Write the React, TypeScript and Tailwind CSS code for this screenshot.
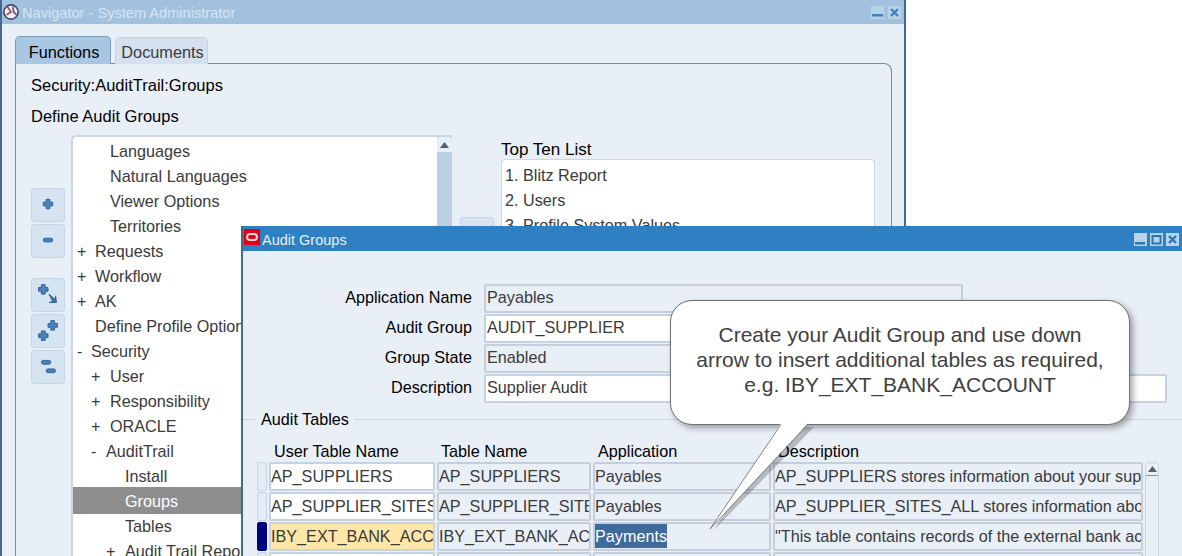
const FONT = "font-['Liberation_Sans',Arial,sans-serif]";

interface TreeRow {
  glyph?: string;
  glyphX?: number;
  label: string;
  x: number;
  selected?: boolean;
}

const TREE_ROWS: TreeRow[] = [
  { label: "Languages", x: 110 },
  { label: "Natural Languages", x: 110 },
  { label: "Viewer Options", x: 110 },
  { label: "Territories", x: 110 },
  { glyph: "+", glyphX: 77, label: "Requests", x: 95 },
  { glyph: "+", glyphX: 77, label: "Workflow", x: 95 },
  { glyph: "+", glyphX: 77, label: "AK", x: 95 },
  { label: "Define Profile Options", x: 95 },
  { glyph: "-", glyphX: 77, label: "Security", x: 91 },
  { glyph: "+", glyphX: 91, label: "User", x: 110 },
  { glyph: "+", glyphX: 91, label: "Responsibility", x: 110 },
  { glyph: "+", glyphX: 91, label: "ORACLE", x: 110 },
  { glyph: "-", glyphX: 91, label: "AuditTrail", x: 106 },
  { label: "Install", x: 125 },
  { label: "Groups", x: 125, selected: true },
  { label: "Tables", x: 125 },
  { glyph: "+", glyphX: 106, label: "Audit Trail Reports", x: 125 },
];

const TABLE_ROWS = [
  {
    user: "AP_SUPPLIERS",
    table: "AP_SUPPLIERS",
    app: "Payables",
    description: "AP_SUPPLIERS stores information about your supplier level attributes",
  },
  {
    user: "AP_SUPPLIER_SITES_ALL",
    table: "AP_SUPPLIER_SITES_ALL",
    app: "Payables",
    description: "AP_SUPPLIER_SITES_ALL stores information about your supplier site level",
  },
  {
    user: "IBY_EXT_BANK_ACCOUNT",
    table: "IBY_EXT_BANK_ACCOUNTS",
    app: "Payments",
    description: '"This table contains records of the external bank accounts',
    current: true,
  },
];

function PlusMark({ x, y }: { x: number; y: number }) {
  return (
    <path
      d={`M${x - 2} ${y - 5}h4v3h3v4h-3v3h-4v-3h-3v-4h3z`}
      fill="#4a82bd"
      stroke="#2f5f96"
      strokeWidth="1"
    />
  );
}

function MinusMark({ x, y }: { x: number; y: number }) {
  return <rect x={x - 5} y={y - 2} width="10" height="4" rx="2" fill="#4a82bd" stroke="#2f5f96" />;
}

function ToolButton({ children, className = "" }: { children: React.ReactNode; className?: string }) {
  return (
    <div className={`h-[34px] w-[34px] rounded-[3px] border border-[#c5d5e6] bg-[#d6e4f2] ${className}`}>
      <svg viewBox="0 0 34 34" className="h-full w-full">
        {children}
      </svg>
    </div>
  );
}

function WinButton({ children }: { children: React.ReactNode }) {
  return (
    <div className="h-[13px] w-[13px] bg-[#b7d3ea]">
      <svg viewBox="0 0 13 13" className="h-full w-full">
        {children}
      </svg>
    </div>
  );
}

function FormRow({
  label,
  value,
  width,
  white,
}: {
  label: string;
  value: string;
  width: number;
  white?: boolean;
}) {
  return (
    <div className="flex h-[30px] items-center">
      <div className="w-[229px] pb-[2px] text-right text-black">{label}</div>
      <div
        className={`ml-3 flex h-[29px] items-center rounded-[2px] border-2 pb-[2px] pl-[1px] text-[#3a3a3a] ${
          white ? "border-[#c4d2e2] bg-white" : "border-[#c4cfdb] bg-[#e9eff7]"
        }`}
        style={{ width }}
      >
        {value}
      </div>
    </div>
  );
}

function Cell({
  children,
  width,
  kind = "readonly",
}: {
  children?: React.ReactNode;
  width: number;
  kind?: "readonly" | "white" | "yellow";
}) {
  const tone =
    kind === "white"
      ? "bg-white border-[#c4d2e2]"
      : kind === "yellow"
        ? "bg-[#fde6a8] border-[#c9d3de]"
        : "bg-[#e9eff7] border-[#c4cfdb]";
  return (
    <div
      className={`flex h-[29px] shrink-0 items-center overflow-hidden whitespace-nowrap rounded-[2px] border-2 pb-[2px] text-[#3a3a3a] ${tone}`}
      style={{ width }}
    >
      {children}
    </div>
  );
}

export default function App() {
  return (
    <div className={`${FONT} relative h-[556px] w-[1182px] overflow-hidden bg-white text-[16.2px] leading-[18px]`}>
      {/* Navigator window, behind */}
      <div className="flex h-[556px] w-[906px] flex-col border-x-2 border-r-[#46678e] border-l-[#46678e] bg-[#e9eff7]">
        <div className="flex h-[24px] shrink-0 items-center justify-between bg-[#a2c1de] pr-[3px] pl-[1px]">
          <div className="flex items-center">
            <svg viewBox="0 0 18 18" className="h-[16px] w-[16px]">
              <circle cx="9" cy="9" r="8" fill="#f4f0f4" stroke="#44446e" strokeWidth="1.8" />
              <path d="M5 3 9 9l-5 3" fill="none" stroke="#b04a66" strokeWidth="2" />
              <path d="M11 3l1 6 3 3" fill="none" stroke="#5a5f98" strokeWidth="2" />
            </svg>
            <span className="mt-[2px] ml-[3px] text-[14.6px] text-[#d7e4f0]">Navigator - System Administrator</span>
          </div>
          <div className="flex gap-[4px]">
            <WinButton>
              <rect x="1" y="8" width="11" height="2.5" fill="#3f83bd" />
            </WinButton>
            <WinButton>
              <path d="M3 3l7 7M10 3l-7 7" stroke="#3f83bd" strokeWidth="2.4" />
            </WinButton>
          </div>
        </div>

        <div className="flex flex-1 flex-col pt-[12px] pr-[12px] pl-[13px]">
          <div className="z-10 -mb-px flex items-end gap-[4px] text-[16.3px]">
            <div className="flex h-[28px] w-[96px] items-center justify-center rounded-t-[5px] border border-b-0 border-[#7d9ab8] bg-[#a9c7e3] pt-[2px] pl-[2px] text-black">
              Functions
            </div>
            <div className="flex h-[27px] w-[93px] items-center justify-center rounded-t-[5px] border border-b-0 border-[#c3d1e0] bg-[#d5e1ee] pt-[1px] pl-[2px] text-[#3b3b3b]">
              Documents
            </div>
          </div>
          <div className="flex-1 rounded-tr-[8px] border border-b-0 border-[#6f8fae] pt-[12px] pl-[15px]">
            <div className="text-[16.5px] text-black">Security:AuditTrail:Groups</div>
            <div className="mt-[13px] text-[16.5px] text-black">Define Audit Groups</div>
            <div className="mt-[10px] flex items-start">
              {/* Tree toolbar */}
              <div className="mt-[53px] flex w-[40px] shrink-0 flex-col gap-[2px]">
                <ToolButton>
                  <PlusMark x={17} y={16} />
                </ToolButton>
                <ToolButton>
                  <MinusMark x={17} y={16} />
                </ToolButton>
                <ToolButton className="mt-[18px]">
                  <PlusMark x={12} y={11} />
                  <path d="M18 16l7 6v-4l1 7h-8l4-1z" fill="#3e74ad" stroke="#2f5f96" />
                </ToolButton>
                <ToolButton>
                  <PlusMark x={22} y={11} />
                  <PlusMark x={12} y={22} />
                </ToolButton>
                <ToolButton>
                  <MinusMark x={15} y={12} />
                  <MinusMark x={20} y={21} />
                </ToolButton>
              </div>

              {/* Function tree */}
              <div className="flex h-[430px] w-[381px] shrink-0 rounded-tl-[5px] border-t-2 border-l-2 border-[#c9d6e6] bg-white">
                <div className="flex-1 overflow-hidden pt-[2px] text-[#3a3a3a]">
                  {TREE_ROWS.map((row) => (
                    <div
                      key={row.label}
                      className={`relative flex items-center ${
                        row.selected ? "-mt-[2px] h-[27px] bg-[#8e8e8e] pt-[1px] text-white" : "h-[25px] pb-[2px]"
                      }`}
                    >
                      {row.glyph && (
                        <span className="absolute" style={{ left: (row.glyphX ?? 0) - 73 }}>
                          {row.glyph}
                        </span>
                      )}
                      <span className="absolute whitespace-nowrap" style={{ left: row.x - 73 }}>
                        {row.label}
                      </span>
                    </div>
                  ))}
                </div>
                <div className="flex w-[15px] shrink-0 flex-col bg-[#bdd0e6]">
                  <div className="flex h-[15px] items-center justify-center rounded-t-[3px] bg-[#e9eff7]">
                    <svg viewBox="0 0 9 6" className="h-[6px] w-[9px]">
                      <path d="M4.5 0 9 6H0z" fill="#55606c" />
                    </svg>
                  </div>
                </div>
              </div>

              <div className="mt-[82px] ml-[8px] h-[40px] w-[34px] shrink-0 rounded-[3px] border border-[#c5d5e6] bg-[#d6e4f2]" />

              {/* Top ten */}
              <div className="mt-[3px] ml-[7px] flex w-[374px] shrink-0 flex-col">
                <div className="h-[21px] pt-[3px] text-[17px] text-black">Top Ten List</div>
                <div className="h-[100px] rounded-t-[4px] border border-b-0 border-[#c9d6e6] bg-white pt-[3px] pl-[3px] text-[#3a3a3a]">
                  <div className="flex h-[25px] items-center pb-[2px]">1. Blitz Report</div>
                  <div className="flex h-[25px] items-center pb-[2px]">2. Users</div>
                  <div className="flex h-[25px] items-center pb-[2px]">3. Profile System Values</div>
                </div>
              </div>
            </div>
          </div>
        </div>
      </div>

      {/* Audit Groups window, on top */}
      <div className="absolute top-[226px] left-[241px] flex h-[330px] w-[941px] flex-col border-l-2 border-[#46678e] bg-[#e9eff7]">
        <div className="flex h-[25px] shrink-0 items-start justify-between bg-[#2e80c3] pt-[3px] pr-[3px] pl-[1px]">
          <div className="flex items-start">
            <div className="flex h-[16px] w-[16px] items-center justify-center bg-[#e3001b]">
              <div className="h-[8px] w-[12px] rounded-[4px] border-2 border-[#f5d8d8]" />
            </div>
            <span className="mt-[2px] ml-[2px] text-[14.5px] text-[#e6eff8]">Audit Groups</span>
          </div>
          <div className="mt-[4px] flex gap-[3px]">
            <WinButton>
              <rect x="1" y="9" width="10" height="2.5" fill="#2f75b0" />
            </WinButton>
            <WinButton>
              <rect x="2.5" y="3" width="8" height="7.5" fill="none" stroke="#2f75b0" strokeWidth="2" />
            </WinButton>
            <WinButton>
              <path d="M3 3l7 7M10 3l-7 7" stroke="#2f75b0" strokeWidth="2.4" />
            </WinButton>
          </div>
        </div>

        <div className="flex flex-1 flex-col pt-[32px]">
          <FormRow label="Application Name" value="Payables" width={479} />
          <FormRow label="Audit Group" value="AUDIT_SUPPLIER" width={479} white />
          <FormRow label="Group State" value="Enabled" width={479} />
          <FormRow label="Description" value="Supplier Audit" width={683} white />

          <div className="mt-[5px] flex h-[22px] items-center">
            <div className="h-px w-[13px] bg-[#c9d6e6]" />
            <div className="px-[5px] text-black">Audit Tables</div>
            <div className="h-px flex-1 bg-[#c9d6e6]" />
          </div>

          <div className="mt-[11px] flex h-[21px] items-center pb-[2px] text-black">
            <span className="ml-[31px] w-[167px]">User Table Name</span>
            <span className="w-[157px]">Table Name</span>
            <span className="w-[180px]">Application</span>
            <span>Description</span>
          </div>

          <div className="flex pl-[14px]">
            <div className="flex w-[886px] flex-col gap-px">
              {[...TABLE_ROWS, null].map((row) => (
                <div key={row ? row.user : "empty"} className="flex h-[29px] gap-[2px]">
                  <div
                    className={`h-[29px] w-[10px] shrink-0 rounded-[2px] border ${
                      row?.current ? "border-[#000080] bg-[#000080]" : "border-[#c9d6e6] bg-[#e2eaf3]"
                    }`}
                  />
                  <Cell width={166} kind={row?.current ? "yellow" : "white"}>
                    {row?.user}
                  </Cell>
                  <Cell width={154}>{row?.table}</Cell>
                  <Cell width={178}>
                    {row?.current ? (
                      <span className="bg-[#3f6a9c] py-[3px] text-white">{row.app}</span>
                    ) : (
                      row?.app
                    )}
                  </Cell>
                  <Cell width={370}>{row?.description}</Cell>
                </div>
              ))}
            </div>
            <div className="ml-[2px] h-[100px] w-[14px] rounded-t-[4px] border border-[#c9d6e6]">
              <div className="flex h-[13px] items-center justify-center border-b border-[#7f93a8]">
                <svg viewBox="0 0 9 6" className="h-[6px] w-[9px]">
                  <path d="M4.5 0 9 6H0z" fill="#55606c" />
                </svg>
              </div>
            </div>
          </div>
        </div>
      </div>

      {/* Callout */}
      <div className="absolute top-[300px] left-[670px] flex h-[125px] w-[460px] flex-col items-center justify-center rounded-[22px] border border-[#707070] bg-white pb-[6px] text-center text-[21px] leading-[25px] whitespace-nowrap text-[#404040] shadow-[3px_3px_6px_rgba(0,0,0,0.35)]">
        <div>Create your Audit Group and use down</div>
        <div>arrow to insert additional tables as required,</div>
        <div>e.g. IBY_EXT_BANK_ACCOUNT</div>
      </div>
      <svg className="absolute top-[423px] left-[705px] h-[110px] w-[110px]" viewBox="0 0 110 110">
        <path d="M76 2 5 106 106 2" fill="#000" fillOpacity="0.22" transform="translate(3 2)" />
        <path d="M76 0 5 106 103 0z" fill="white" />
        <path d="M76 1.5 5 106 103 1.5" fill="none" stroke="#808080" strokeWidth="1" />
      </svg>
    </div>
  );
}
